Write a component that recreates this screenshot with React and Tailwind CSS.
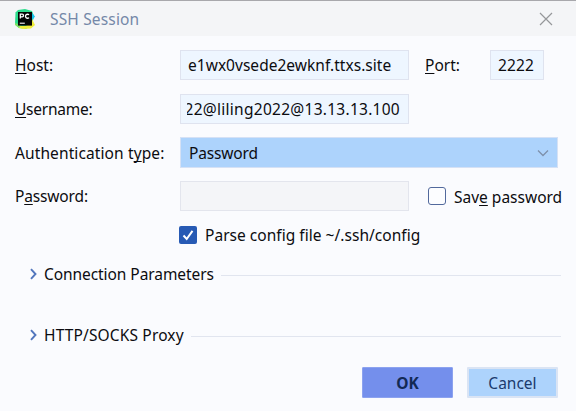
import React from "react";

function Mnemonic({ children }) {
  return <span className="underline decoration-1 underline-offset-2 [text-decoration-skip-ink:none]">{children}</span>;
}

function Field({ className, children }) {
  return (
    <div className={"flex h-[30px] shrink-0 items-center overflow-hidden border border-[#dfe3ef] bg-[#eef6ff] whitespace-nowrap " + className}>
      {children}
    </div>
  );
}

function AppLogo() {
  return (
    <svg className="h-5 w-5 shrink-0" viewBox="0 0 20 20">
      <path d="M0.5 3.5 3 1l7-1 7 2 2 5-2 9-6 4-7-1-4-4z" fill="#2bdc8b" />
      <path d="M14 3l3 1 3 3.5-3 4-3-2z" fill="#14c4ee" />
      <path d="M3 17h8l6-7 3 6-4 3.5-8 .5-4-1z" fill="#f0ee3c" />
      <path d="M0 14l6 2-2 3-4-3z" fill="#7fe364" />
      <rect x="3" y="3" width="14" height="13.6" fill="#050505" />
      <path d="M5.3 9.4V5.2h1.9a1.3 1.3 0 010 2.6H5.3M14 5.9a2 2 0 100 2.7" fill="none" stroke="#fff" strokeWidth="1.3" />
      <path d="M4.8 14.2h5" stroke="#fff" strokeWidth="1.1" />
    </svg>
  );
}

function Section({ title, className }) {
  return (
    <div className="flex h-6 items-center pl-[29px] pr-[15px]">
      <svg className="mr-[6px] -mt-[3px] h-3 w-[9px] shrink-0" viewBox="0 0 9 12">
        <path d="M2 1.2 6.5 6 2 10.8" fill="none" stroke="#5276bd" strokeWidth="1.9" />
      </svg>
      <span className={"-mt-[2px] shrink-0 whitespace-nowrap " + className}>{title}</span>
      <div className="h-px grow bg-[#e1e5ef]" />
    </div>
  );
}

export default function App() {
  return (
    <div className="flex h-[411px] w-[576px] flex-col overflow-hidden bg-[#fafbfe] font-['Noto_Sans',sans-serif] text-[15.5px] leading-6 text-[#0c0c10]">
      <header className="flex h-9 shrink-0 items-center border-t border-[#a8a8ac] bg-[#f4f5f7] pl-[15px] pr-[23px]">
        <AppLogo />
        <span className="ml-[15px] tracking-[0.16px] text-[#7488a8]">SSH Session</span>
        <svg className="ml-auto h-[14px] w-[14px]" viewBox="0 0 14 14">
          <path d="M1 1l12 12M13 1 1 13" stroke="#96979a" strokeWidth="1.2" />
        </svg>
      </header>

      <div className="mt-[14px] flex h-[30px] shrink-0 items-center">
        <label className="w-[180px] pl-[15px]"><Mnemonic>H</Mnemonic>ost:</label>
        <Field className="w-[229px] pl-[7px] tracking-[0.03px]">e1wx0vsede2ewknf.ttxs.site</Field>
        <label className="w-[81px] pl-4"><Mnemonic>P</Mnemonic>ort:</label>
        <Field className="w-[54px] pl-[7px] tracking-[0.1px]">2222</Field>
      </div>

      <div className="mt-[14px] flex h-[30px] shrink-0 items-center">
        <label className="w-[180px] pl-[15px] tracking-[-0.25px]"><Mnemonic>U</Mnemonic>sername:</label>
        <Field className="w-[229px] pl-[6px] pr-2">
          <div className="flex w-full justify-end overflow-hidden"><span className="tracking-[0.27px]">022@liling2022@13.13.13.100</span></div>
        </Field>
      </div>

      <div className="mt-[13px] flex h-[31px] shrink-0 items-center">
        <label className="w-[180px] pl-[15px] tracking-[0.11px]">Authentication t<Mnemonic>y</Mnemonic>pe:</label>
        <div className="flex h-[31px] w-[378px] items-center justify-between border border-[#d5e1f5] bg-[#add3fc] pl-2 pr-[8px]">
          <span className="tracking-[-0.15px]">Password</span>
          <svg className="h-[8px] w-[12px]" viewBox="0 0 12 8">
            <path d="M1 1.5 6 6.5l5-5" fill="none" stroke="#7e90ab" strokeWidth="1.3" />
          </svg>
        </div>
      </div>

      <div className="mt-[13px] flex h-[30px] shrink-0 items-center">
        <label className="w-[180px] pl-[15px] tracking-[-0.15px]">P<Mnemonic>a</Mnemonic>ssword:</label>
        <div className="h-[30px] w-[229px] border border-[#e3e5ed] bg-[#f4f5f8]" />
        <div className="ml-[19px] h-[18px] w-[18px] rounded-[3px] border-[1.5px] border-[#52699c] bg-[#fcfdff]" />
        <label className="ml-2 mt-[2px] whitespace-nowrap">Sav<Mnemonic>e</Mnemonic> password</label>
      </div>

      <div className="mt-[12px] flex h-6 shrink-0 items-center pl-[179px]">
        <div className="flex h-[18px] w-[18px] items-center justify-center rounded-[2px] bg-[#275ab4]">
          <svg className="h-3 w-3" viewBox="0 0 12 12">
            <path d="M1.5 6.5 4.7 10 10.5 1.8" fill="none" stroke="#fff" strokeWidth="2" />
          </svg>
        </div>
        <label className="ml-2 tracking-[0.03px]">Parse config file ~/.ssh/config</label>
      </div>

      <div className="mt-4"><Section title="Connection Parameters" className="w-[177px] tracking-[-0.07px]" /></div>
      <div className="mt-[37px]"><Section title="HTTP/SOCKS Proxy" className="w-[147px] tracking-[0.15px]" /></div>

      <footer className="mt-[19px] flex justify-end gap-[14px] pr-[18px]">
        <button className="h-[31px] w-[91px] rounded-[1px] border border-[#8ca2ef] bg-[#748fec] font-bold text-[#132a55]">OK</button>
        <button className="h-[31px] w-[91px] rounded-[1px] border-2 border-[#dae4f4] bg-[#add3fc] text-[#1b3a6c]">Cancel</button>
      </footer>
    </div>
  );
}
